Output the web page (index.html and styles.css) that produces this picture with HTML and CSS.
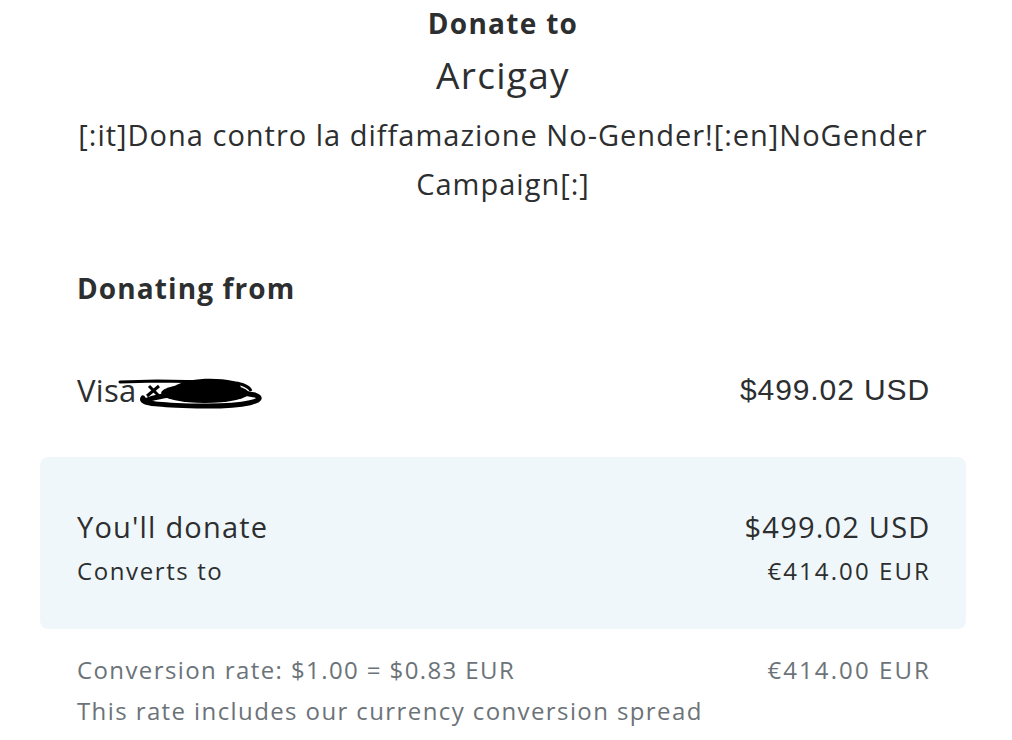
FILE: index.html
```html
<!DOCTYPE html>
<html lang="en">
<head>
<meta charset="utf-8">
<title>Donate to Arcigay</title>
<link rel="stylesheet" href="styles.css">
</head>
<body>
<main class="page">
  <header class="head">
    <div class="kicker">Donate to</div>
    <h1 class="org">Arcigay</h1>
    <p class="campaign">[:it]Dona contro la diffamazione No-Gender![:en]NoGender Campaign[:]</p>
  </header>

  <h2 class="section-title">Donating from</h2>

  <div class="row source">
    <div class="card"><span class="card-name">Visa</span><svg class="scribble" width="150" height="36" viewBox="0 0 150 36" aria-hidden="true">
        <path d="M3 8 L40 7 L100 8" stroke="#000" stroke-width="3" fill="none" stroke-linecap="round"/>
        <path d="M28 27 C45 19 110 15 138 21 C152 26 130 33 80 32 C45 31 22 30 26 24" stroke="#000" stroke-width="5" fill="none" stroke-linecap="round"/>
        <ellipse cx="88" cy="19" rx="44" ry="10" fill="#000"/>
        <path d="M58 12 C70 4 98 3 116 7 C128 11 126 19 112 21 L70 23 Z" fill="#000"/>
        <path d="M30 22 L42 12 M32 12 L44 24 M46 18 L58 18" stroke="#000" stroke-width="3" fill="none"/>
        <path d="M112 9 C122 8 132 12 134 17" stroke="#000" stroke-width="3" fill="none"/>
      </svg></div>
    <div class="amount-plain">$499.02 USD</div>
  </div>

  <section class="summary">
    <div class="row big">
      <span>You'll donate</span>
      <span class="val">$499.02 USD</span>
    </div>
    <div class="row small">
      <span>Converts to</span>
      <span class="val eur">€414.00 EUR</span>
    </div>
  </section>

  <div class="rate">
    <div class="row">
      <span>Conversion rate: $1.00 = $0.83 EUR</span>
      <span class="val eur">€414.00 EUR</span>
    </div>
    <div class="row">
      <span>This rate includes our currency conversion spread</span>
    </div>
  </div>
</main>
</body>
</html>
```
FILE: styles.css
```css
* { box-sizing: border-box; }
html, body { margin: 0; padding: 0; background: #fff; }
body {
  font-family: "Open Sans", "Noto Sans", sans-serif;
  color: #2c2e2f;
}
.page {
  width: 926px;
  margin-left: 40px;
}
.head { text-align: center; }
.kicker {
  font-size: 28px;
  font-weight: 700;
  line-height: 46px;
  letter-spacing: 1.3px;
}
.org {
  margin: 0;
  font-size: 37px;
  font-weight: 400;
  line-height: 58px;
  letter-spacing: 1.3px;
}
.campaign {
  margin: 6px 0 0;
  font-size: 29px;
  line-height: 49px;
  padding: 0 20px;
  letter-spacing: 1px;
}
.section-title {
  margin: 60px 0 0;
  padding: 0 37px;
  font-size: 28px;
  font-weight: 700;
  line-height: 40px;
  letter-spacing: 1.1px;
}
.row {
  display: flex;
  justify-content: space-between;
  align-items: center;
  padding: 0 37px;
}
.source {
  margin-top: 62px;
  height: 40px;
}
.card {
  display: flex;
  align-items: center;
}
.card-name {
  font-family: "Open Sans", sans-serif;
  font-size: 31px;
  letter-spacing: 0.3px;
  color: #2c2e2f;
}
.scribble { margin-left: -20px; margin-top: 4px; }
.amount-plain {
  font-family: "Liberation Sans", Arial, sans-serif;
  font-size: 30px;
  letter-spacing: 0.9px;
  margin-right: -1px;
}
.summary {
  margin-top: 47px;
  background: #f0f7fa;
  border-radius: 8px;
  padding: 50px 0 42px;
}
.summary .big { font-size: 29px; line-height: 40px; letter-spacing: 1.2px; }
.summary .small { font-size: 24px; line-height: 32px; margin-top: 8px; letter-spacing: 1.6px; }
.val { margin-right: -1.5px; }
.val.eur { letter-spacing: 2.1px; margin-right: -2px; }
.rate {
  margin-top: 21px;
  color: #6c7378;
  font-size: 24px;
  letter-spacing: 1.4px;
}
.rate .row { line-height: 40px; }
.rate .row + .row { margin-top: 1px; }
```
